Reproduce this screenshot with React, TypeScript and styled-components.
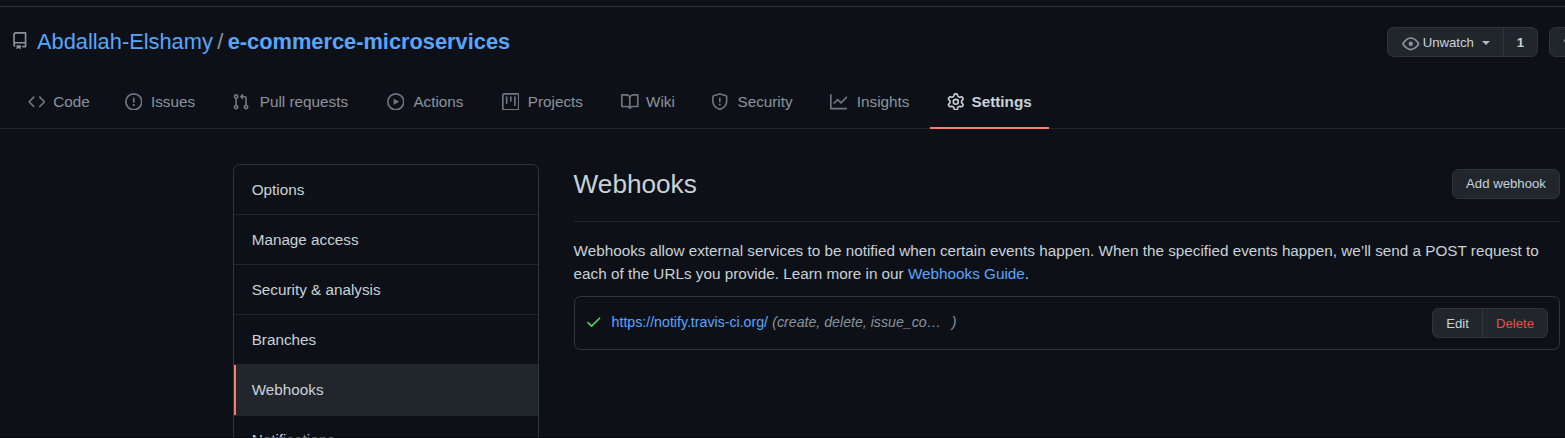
import React from 'react';
import styled, { createGlobalStyle, css } from 'styled-components';

const Global = createGlobalStyle`
  * { box-sizing: border-box; }
  body {
    margin: 0;
    background: #0d1117;
    color: #c9d1d9;
    font: 15.275px/23.1px "Liberation Sans", Arial, sans-serif;
    overflow: hidden;
  }
  a { color: #58a6ff; text-decoration: none; }
  h2 { margin: 0; }
`;

const icons = {
  repo: 'M2 2.5A2.5 2.5 0 014.5 0h8.75a.75.75 0 01.75.75v12.5a.75.75 0 01-.75.75h-2.5a.75.75 0 110-1.5h1.75v-2h-8a1 1 0 00-.714 1.7.75.75 0 01-1.072 1.05A2.495 2.495 0 012 11.5v-9zm10.5-1V9h-8c-.356 0-.694.074-1 .208V2.5a1 1 0 011-1h8zM5 12.25v3.25a.25.25 0 00.4.2l1.45-1.087a.25.25 0 01.3 0L8.6 15.7a.25.25 0 00.4-.2v-3.25a.25.25 0 00-.25-.25h-3.5a.25.25 0 00-.25.25z',
  code: 'M4.72 3.22a.75.75 0 011.06 1.06L2.06 8l3.72 3.72a.75.75 0 11-1.06 1.06L.47 8.53a.75.75 0 010-1.06l4.25-4.25zm6.56 0a.75.75 0 10-1.06 1.06L13.94 8l-3.72 3.72a.75.75 0 101.06 1.06l4.25-4.25a.75.75 0 000-1.06l-4.25-4.25z',
  issues: 'M8 1.5a6.5 6.5 0 100 13 6.5 6.5 0 000-13zM0 8a8 8 0 1116 0A8 8 0 010 8zm9 3a1 1 0 11-2 0 1 1 0 012 0zm-.25-6.25a.75.75 0 00-1.5 0v3.5a.75.75 0 001.5 0v-3.5z',
  pulls: 'M7.177 3.073L9.573.677A.25.25 0 0110 .854v4.792a.25.25 0 01-.427.177L7.177 3.427a.25.25 0 010-.354zM3.75 2.5a.75.75 0 100 1.5.75.75 0 000-1.5zm-2.25.75a2.25 2.25 0 113 2.122v5.256a2.251 2.251 0 11-1.5 0V5.372A2.25 2.25 0 011.5 3.25zM11 2.5h-1V4h1a1 1 0 011 1v5.628a2.251 2.251 0 101.5 0V5A2.5 2.5 0 0011 2.5zm1 10.25a.75.75 0 111.5 0 .75.75 0 01-1.5 0zM3.75 12a.75.75 0 100 1.5.75.75 0 000-1.5z',
  actions: 'M1.5 8a6.5 6.5 0 1113 0 6.5 6.5 0 01-13 0zM8 0a8 8 0 100 16A8 8 0 008 0zM6.379 5.227A.25.25 0 006 5.442v5.117a.25.25 0 00.379.214l4.264-2.559a.25.25 0 000-.428L6.379 5.227z',
  projects: 'M1.75 0A1.75 1.75 0 000 1.75v12.5C0 15.216.784 16 1.75 16h12.5A1.75 1.75 0 0016 14.25V1.75A1.75 1.75 0 0014.25 0H1.75zM1.5 1.75a.25.25 0 01.25-.25h12.5a.25.25 0 01.25.25v12.5a.25.25 0 01-.25.25H1.75a.25.25 0 01-.25-.25V1.75zM11.75 3a.75.75 0 00-.75.75v7.5a.75.75 0 001.5 0v-7.5a.75.75 0 00-.75-.75zm-8.25.75a.75.75 0 011.5 0v5.5a.75.75 0 01-1.5 0v-5.5zM8 3a.75.75 0 00-.75.75v3.5a.75.75 0 001.5 0v-3.5A.75.75 0 008 3z',
  wiki: 'M0 1.75A.75.75 0 01.75 1h4.253c1.227 0 2.317.59 3 1.501A3.744 3.744 0 0111.006 1h4.245a.75.75 0 01.75.75v10.5a.75.75 0 01-.75.75h-4.507a2.25 2.25 0 00-1.591.659l-.622.621a.75.75 0 01-1.06 0l-.622-.621A2.25 2.25 0 005.258 13H.75a.75.75 0 01-.75-.75V1.75zm8.755 3a2.25 2.25 0 012.25-2.25H14.5v9h-3.757c-.71 0-1.4.201-1.992.572l.004-7.322zm-1.504 7.324l.004-5.073-.002-2.253A2.25 2.25 0 005.003 2.5H1.5v9h3.757a3.75 3.75 0 011.994.574z',
  security: 'M7.467.133a1.75 1.75 0 011.066 0l5.25 1.68A1.75 1.75 0 0115 3.48V7c0 1.566-.32 3.182-1.303 4.682-.983 1.498-2.585 2.813-5.032 3.855a1.7 1.7 0 01-1.33 0c-2.447-1.042-4.049-2.357-5.032-3.855C1.32 10.182 1 8.566 1 7V3.48a1.75 1.75 0 011.217-1.667l5.25-1.68zm.61 1.429a.25.25 0 00-.153 0l-5.25 1.68a.25.25 0 00-.174.238V7c0 1.358.275 2.666 1.057 3.86.784 1.194 2.121 2.34 4.366 3.297a.2.2 0 00.154 0c2.245-.956 3.582-2.104 4.366-3.298C13.225 9.666 13.5 8.36 13.5 7V3.48a.25.25 0 00-.174-.237l-5.25-1.68zM9 10.5a1 1 0 11-2 0 1 1 0 012 0zm-.25-5.75a.75.75 0 10-1.5 0v3a.75.75 0 001.5 0v-3z',
  insights: 'M1.5 1.75a.75.75 0 00-1.5 0v12.5c0 .414.336.75.75.75h14.5a.75.75 0 000-1.5H1.5V1.75zm14.28 2.53a.75.75 0 00-1.06-1.06L10 7.94 7.53 5.47a.75.75 0 00-1.06 0L3.22 8.72a.75.75 0 001.06 1.06L7 7.06l2.47 2.47a.75.75 0 001.06 0l5.25-5.25z',
  settings: 'M7.429 1.525a6.593 6.593 0 011.142 0c.036.003.108.036.137.146l.289 1.105c.147.56.55.967.997 1.189.174.086.341.183.501.29.417.278.97.423 1.53.27l1.102-.303c.11-.03.175.016.195.046.219.31.41.641.573.989.014.031.022.11-.059.19l-.815.806c-.411.406-.562.957-.53 1.456a4.588 4.588 0 010 .582c-.032.499.119 1.05.53 1.456l.815.806c.08.08.073.159.059.19a6.494 6.494 0 01-.573.99c-.02.029-.086.074-.195.045l-1.103-.303c-.559-.153-1.112-.008-1.529.27-.16.107-.327.204-.5.29-.449.222-.851.628-.998 1.189l-.289 1.105c-.029.11-.101.143-.137.146a6.613 6.613 0 01-1.142 0c-.036-.003-.108-.037-.137-.146l-.289-1.105c-.147-.56-.55-.967-.997-1.189a4.502 4.502 0 01-.501-.29c-.417-.278-.97-.423-1.53-.27l-1.102.303c-.11.03-.175-.016-.195-.046a6.492 6.492 0 01-.573-.989c-.014-.031-.022-.11.059-.19l.815-.806c.411-.406.562-.957.53-1.456a4.587 4.587 0 010-.582c.032-.499-.119-1.05-.53-1.456l-.815-.806c-.08-.08-.073-.159-.059-.19a6.44 6.44 0 01.573-.99c.02-.029.086-.075.195-.045l1.103.303c.559.153 1.112.008 1.529-.27.16-.107.327-.204.5-.29.449-.222.851-.628.998-1.189l.289-1.105c.029-.11.101-.143.137-.146zM8 0c-.236 0-.47.01-.701.03-.743.065-1.29.615-1.458 1.261l-.29 1.106c-.017.066-.078.158-.211.224a5.994 5.994 0 00-.668.386c-.123.082-.233.09-.3.071L3.27 2.776c-.644-.177-1.392.02-1.82.63a7.977 7.977 0 00-.704 1.217c-.315.675-.111 1.422.363 1.891l.815.806c.05.048.098.147.088.294a6.084 6.084 0 000 .772c.01.147-.038.246-.088.294l-.815.806c-.474.469-.678 1.216-.363 1.891.2.428.436.835.704 1.218.428.609 1.176.806 1.82.63l1.103-.303c.066-.019.176-.011.299.071.213.143.436.272.668.386.133.066.194.158.212.224l.289 1.106c.169.646.715 1.196 1.458 1.26a8.094 8.094 0 001.402 0c.743-.064 1.29-.614 1.458-1.26l.29-1.106c.017-.066.078-.158.211-.224a5.98 5.98 0 00.668-.386c.123-.082.233-.09.3-.071l1.102.302c.644.177 1.392-.02 1.82-.63.268-.382.505-.789.704-1.217.315-.675.111-1.422-.364-1.891l-.814-.806c-.05-.048-.098-.147-.088-.294a6.1 6.1 0 000-.772c-.01-.147.039-.246.088-.294l.814-.806c.475-.469.679-1.216.364-1.891a7.992 7.992 0 00-.704-1.218c-.428-.609-1.176-.806-1.82-.63l-1.103.303c-.066.019-.176.011-.299-.071a5.991 5.991 0 00-.668-.386c-.133-.066-.194-.158-.212-.224L10.16 1.29C9.99.645 9.444.095 8.701.031A8.094 8.094 0 008 0zm1.5 8a1.5 1.5 0 11-3 0 1.5 1.5 0 013 0zM11 8a3 3 0 11-6 0 3 3 0 016 0z',
  eye: 'M1.679 7.932c.412-.621 1.242-1.75 2.366-2.717C5.175 4.242 6.527 3.5 8 3.5c1.473 0 2.824.742 3.955 1.715 1.124.967 1.954 2.096 2.366 2.717a.119.119 0 010 .136c-.412.621-1.242 1.75-2.366 2.717C10.825 11.758 9.473 12.5 8 12.5c-1.473 0-2.824-.742-3.955-1.715C2.92 9.818 2.09 8.69 1.679 8.068a.119.119 0 010-.136zM8 2c-1.981 0-3.67.992-4.933 2.078C1.797 5.169.88 6.423.43 7.1a1.619 1.619 0 000 1.798c.45.678 1.367 1.932 2.637 3.024C4.329 13.008 6.019 14 8 14c1.981 0 3.67-.992 4.933-2.078 1.27-1.091 2.187-2.345 2.637-3.023a1.619 1.619 0 000-1.798c-.45-.678-1.367-1.932-2.637-3.023C11.671 2.992 9.981 2 8 2zm0 8a2 2 0 100-4 2 2 0 000 4z',
  check: 'M13.78 4.22a.75.75 0 010 1.06l-7.25 7.25a.75.75 0 01-1.06 0L2.22 9.28a.75.75 0 011.06-1.06L6 10.94l6.72-6.72a.75.75 0 011.06 0z',
  star: 'M8 .25a.75.75 0 01.673.418l1.882 3.815 4.21.612a.75.75 0 01.416 1.279l-3.046 2.97.719 4.192a.75.75 0 01-1.088.791L8 12.347l-3.766 1.98a.75.75 0 01-1.088-.79l.72-4.194L.818 6.374a.75.75 0 01.416-1.28l4.21-.611L7.327.668A.75.75 0 018 .25zm0 2.445L6.615 5.5a.75.75 0 01-.564.41l-3.097.45 2.24 2.184a.75.75 0 01.216.664l-.528 3.084 2.769-1.456a.75.75 0 01.698 0l2.77 1.456-.53-3.084a.75.75 0 01.216-.664l2.24-2.183-3.096-.45a.75.75 0 01-.564-.41L8 2.694v.001z',
};
type IconName = keyof typeof icons;

const Svg = styled.svg`
  display: block;
  flex: none;
  width: 17.6px;
  height: 17.6px;
  fill: currentColor;
`;
const Icon = ({ name, className }: { name: IconName; className?: string }) => (
  <Svg viewBox="0 0 16 16" className={className} aria-hidden="true">
    <path fillRule="evenodd" d={icons[name]} />
  </Svg>
);

const Page = styled.div`
  position: relative;
  height: 438px;
  overflow: hidden;
  display: flex;
  flex-direction: column;
  &::after {
    content: '';
    position: absolute;
    inset: auto 0 0;
    height: 1px;
    background: rgba(0, 0, 0, 0.5);
  }
`;
const TopBar = styled.div`
  flex: none;
  height: 7px;
  border-bottom: 1px solid #30363d;
`;
const RepoHeader = styled.header`
  flex: none;
  height: 74px;
  display: flex;
  justify-content: space-between;
  padding: 20px 0 0 11px;
`;
const Title = styled.div`
  display: flex;
  align-items: center;
  height: 30px;
  font-size: 21.82px;
  line-height: 30px;
  strong { font-weight: 700; }
`;
const RepoIcon = styled(Icon)`
  color: #8b949e;
  margin: -3px 8.4px 0 0;
`;
const Slash = styled.span`
  margin: 0 4.4px;
  color: #8b949e;
`;
const RepoActions = styled.div`
  display: flex;
  gap: 11px;
  width: 178px;
  overflow: hidden;
`;
const buttonBox = css`
  height: 30px;
  border: 1px solid #30363d;
  border-radius: 6.6px;
  background: #21262d;
  font-size: 13.2px;
  line-height: 28px;
`;
const ButtonGroup = styled.div`
  ${buttonBox}
  flex: none;
  display: flex;
`;
const Segment = styled.span<{ $width: number; $danger?: boolean }>`
  width: ${p => p.$width}px;
  display: flex;
  align-items: center;
  justify-content: center;
  padding-top: 2px;
  color: ${p => (p.$danger ? '#e5504a' : '#c9d1d9')};
  & + & { border-left: 1px solid #30363d; }
  b { font-weight: 700; }
`;
const EyeIcon = styled(Icon)`
  color: #8b949e;
  margin: 2px 3px 0 1px;
`;
const Caret = styled.i`
  margin-left: 8px;
  border: 4.4px solid transparent;
  border-bottom: 0;
  border-top-color: #b1bac4;
`;
const StarButton = styled.div`
  ${buttonBox}
  flex: none;
  display: flex;
  align-items: center;
  width: 90px;
  padding-left: 12px;
`;
const Button = styled.button`
  ${buttonBox}
  width: 108px;
  padding: 0;
  color: #c9d1d9;
  font-family: inherit;
`;

const Nav = styled.nav`
  flex: none;
  display: flex;
  height: 48px;
  padding-left: 10px;
  border-bottom: 1px solid #21262d;
`;
const Tab = styled.a<{ $width: number; $active?: boolean }>`
  && { color: ${p => (p.$active ? '#c9d1d9' : '#8b949e')}; }
  flex: none;
  display: flex;
  align-items: center;
  width: ${p => p.$width}px;
  height: 48px;
  padding: 0 0 7px ${p => (p.$active ? 16.6 : 17.6)}px;
  white-space: nowrap;
  font-weight: ${p => (p.$active ? 700 : 400)};
  box-shadow: ${p => (p.$active ? 'inset 0 -2px #f78166' : 'none')};
`;
const TabIcon = styled(Icon)<{ $active?: boolean; $gap: number }>`
  margin-right: ${p => p.$gap}px;
  color: ${p => (p.$active ? '#c9d1d9' : '#6e7681')};
`;

const Content = styled.div`
  display: flex;
  align-items: flex-start;
  gap: 34.6px;
  padding: 35px 5px 0 233px;
`;
const Menu = styled.nav`
  flex: none;
  width: 306px;
  border: 1px solid #30363d;
  border-radius: 6.6px;
  overflow: hidden;
`;
const MenuItem = styled.a<{ $active?: boolean }>`
  && { color: #c9d1d9; }
  display: block;
  height: 50px;
  padding-left: 17.7px;
  line-height: 50px;
  border-bottom: 1px solid #21262d;
  ${p => p.$active && css`
    height: 51px;
    margin-bottom: -1px;
    background: #21262d;
    box-shadow: inset 2px 0 #f78166;
  `}
`;
const Main = styled.main`
  flex: 1;
  min-width: 0;
`;
const Subhead = styled.div`
  display: flex;
  justify-content: space-between;
  height: 58px;
  padding-top: 5px;
  border-bottom: 1px solid #21262d;
`;
const Heading = styled.h2`
  font-size: 26.18px;
  line-height: 30px;
  font-weight: 400;
`;
const Intro = styled.p`
  margin: 17px 0 11px;
`;
const Hook = styled.div`
  display: flex;
  align-items: center;
  height: 54px;
  padding: 0 11px 0 10px;
  border: 1px solid #30363d;
  border-radius: 6.6px;
  font-size: 14.18px;
`;
const CheckIcon = styled(Icon)`
  color: #56d364;
  margin: -2px 9.4px 0 0;
`;
const HookText = styled.div`
  flex: 1;
  padding-bottom: 2px;
`;
const Events = styled.em`
  margin-left: 4.2px;
  color: #8b949e;
  span { margin-left: 11px; }
`;

const tabs: { icon: IconName; label: string; width: number; gap: number; active?: boolean }[] = [
  { icon: 'code', label: 'Code', width: 97.2, gap: 8 },
  { icon: 'issues', label: 'Issues', width: 107, gap: 8.6 },
  { icon: 'pulls', label: 'Pull requests', width: 155, gap: 10.4 },
  { icon: 'actions', label: 'Actions', width: 115, gap: 9 },
  { icon: 'projects', label: 'Projects', width: 119.3, gap: 8.4 },
  { icon: 'wiki', label: 'Wiki', width: 90.2, gap: 7.4 },
  { icon: 'security', label: 'Security', width: 118.6, gap: 8.6 },
  { icon: 'insights', label: 'Insights', width: 117.7, gap: 9.4 },
  { icon: 'settings', label: 'Settings', width: 119, gap: 7.4, active: true },
];
const menu = ['Options', 'Manage access', 'Security & analysis', 'Branches', 'Webhooks', 'Notifications'];

export default function App() {
  return (
    <Page>
      <Global />
      <TopBar />
      <RepoHeader>
        <Title>
          <RepoIcon name="repo" />
          <a href="#">Abdallah-Elshamy</a>
          <Slash>/</Slash>
          <strong><a href="#">e-commerce-microservices</a></strong>
        </Title>
        <RepoActions>
          <ButtonGroup>
            <Segment $width={115}><EyeIcon name="eye" />Unwatch<Caret /></Segment>
            <Segment $width={34}><b>1</b></Segment>
          </ButtonGroup>
          <StarButton><EyeIcon name="star" />Star</StarButton>
        </RepoActions>
      </RepoHeader>
      <Nav>
        {tabs.map(t => (
          <Tab key={t.label} href="#" $width={t.width} $active={t.active}>
            <TabIcon name={t.icon} $active={t.active} $gap={t.gap} />
            {t.label}
          </Tab>
        ))}
      </Nav>
      <Content>
        <Menu>
          {menu.map(label => (
            <MenuItem key={label} href="#" $active={label === 'Webhooks'}>{label}</MenuItem>
          ))}
        </Menu>
        <Main>
          <Subhead>
            <Heading>Webhooks</Heading>
            <Button>Add webhook</Button>
          </Subhead>
          <Intro>
            Webhooks allow external services to be notified when certain events happen. When the specified
            events happen, we’ll send a POST request to each of the URLs you provide. Learn more in our{' '}
            <a href="#">Webhooks Guide</a>.
          </Intro>
          <Hook>
            <CheckIcon name="check" />
            <HookText>
              <a href="#">https://notify.travis-ci.org/</a>
              <Events>(create, delete, issue_co…<span>)</span></Events>
            </HookText>
            <ButtonGroup>
              <Segment $width={49}>Edit</Segment>
              <Segment $width={65} $danger>Delete</Segment>
            </ButtonGroup>
          </Hook>
        </Main>
      </Content>
    </Page>
  );
}
